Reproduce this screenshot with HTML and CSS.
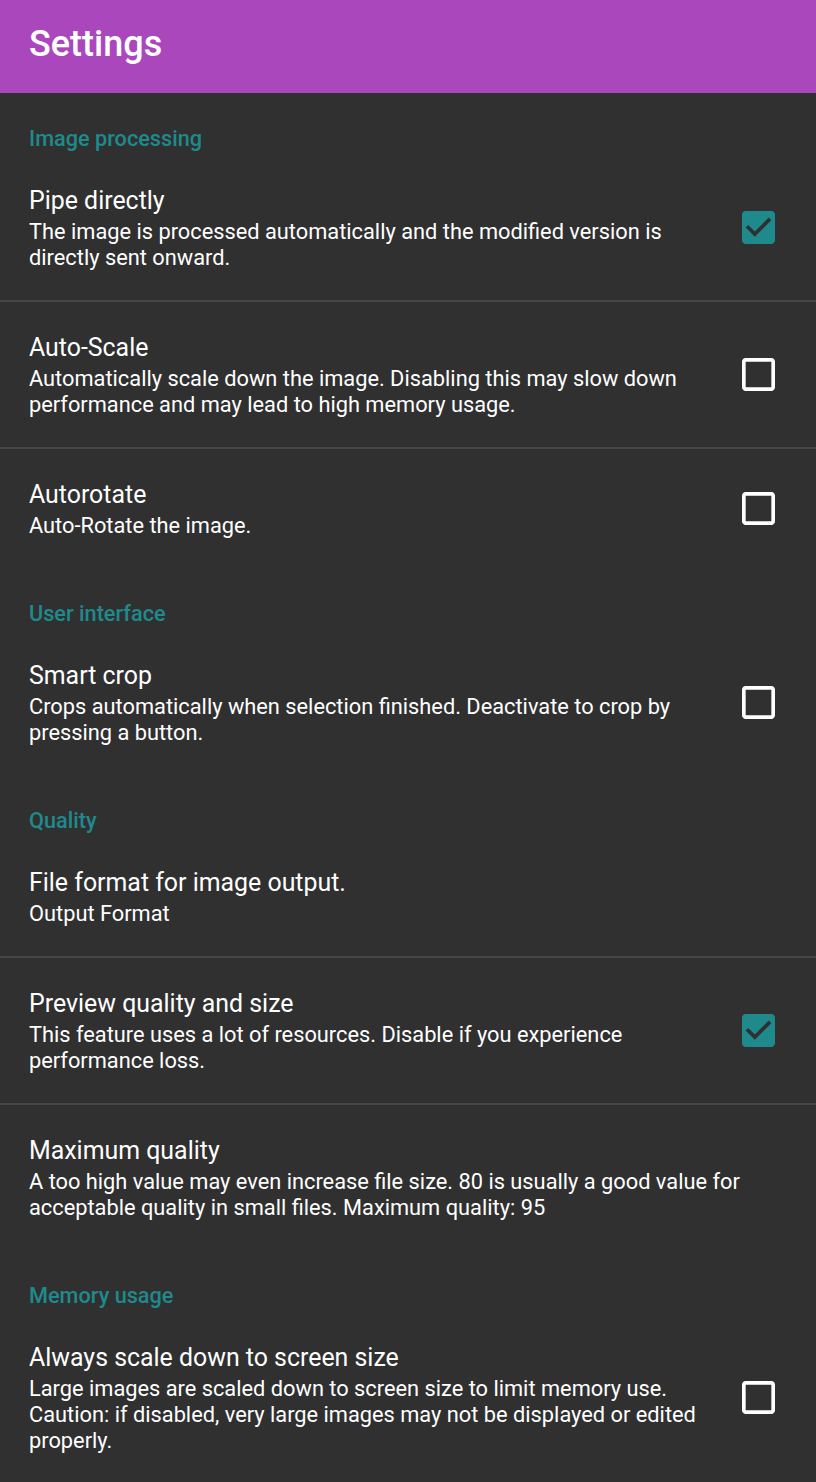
FILE: index.html
```html
<!DOCTYPE html>
<html lang="en">
<head>
<meta charset="utf-8">
<title>Settings</title>
<link rel="stylesheet" href="styles.css">
</head>
<body>
<header class="appbar"><h1 class="appbar-title">Settings</h1></header>
<main class="prefs">
  <div class="category">Image processing</div>
  <div class="item">
    <div class="text">
      <div class="title">Pipe directly</div>
      <div class="summary">The image is processed automatically and the modified version is directly sent onward.</div>
    </div>
    <svg class="cb" viewBox="3 3 18 18"><path class="cb-on" fill-rule="evenodd" d="M19 3H5c-1.11 0-2 .9-2 2v14c0 1.1.89 2 2 2h14c1.11 0 2-.9 2-2V5c0-1.1-.89-2-2-2zm-9 14l-5-5 1.41-1.41L10 14.17l7.59-7.59L19 8l-9 9z"/></svg>
  </div>
  <div class="divider"></div>
  <div class="item">
    <div class="text">
      <div class="title">Auto-Scale</div>
      <div class="summary">Automatically scale down the image. Disabling this may slow down performance and may lead to high memory usage.</div>
    </div>
    <svg class="cb" viewBox="3 3 18 18"><path class="cb-off" d="M19 5v14H5V5h14m0-2H5c-1.1 0-2 .9-2 2v14c0 1.1.9 2 2 2h14c1.1 0 2-.9 2-2V5c0-1.1-.9-2-2-2z"/></svg>
  </div>
  <div class="divider"></div>
  <div class="item">
    <div class="text">
      <div class="title">Autorotate</div>
      <div class="summary">Auto-Rotate the image.</div>
    </div>
    <svg class="cb" viewBox="3 3 18 18"><path class="cb-off" d="M19 5v14H5V5h14m0-2H5c-1.1 0-2 .9-2 2v14c0 1.1.9 2 2 2h14c1.1 0 2-.9 2-2V5c0-1.1-.9-2-2-2z"/></svg>
  </div>

  <div class="category">User interface</div>
  <div class="item">
    <div class="text">
      <div class="title">Smart crop</div>
      <div class="summary">Crops automatically when selection finished. Deactivate to crop by pressing a button.</div>
    </div>
    <svg class="cb" viewBox="3 3 18 18"><path class="cb-off" d="M19 5v14H5V5h14m0-2H5c-1.1 0-2 .9-2 2v14c0 1.1.9 2 2 2h14c1.1 0 2-.9 2-2V5c0-1.1-.9-2-2-2z"/></svg>
  </div>

  <div class="category">Quality</div>
  <div class="item">
    <div class="text">
      <div class="title">File format for image output.</div>
      <div class="summary">Output Format</div>
    </div>
  </div>
  <div class="divider"></div>
  <div class="item">
    <div class="text">
      <div class="title">Preview quality and size</div>
      <div class="summary">This feature uses a lot of resources. Disable if you experience performance loss.</div>
    </div>
    <svg class="cb" viewBox="3 3 18 18"><path class="cb-on" fill-rule="evenodd" d="M19 3H5c-1.11 0-2 .9-2 2v14c0 1.1.89 2 2 2h14c1.11 0 2-.9 2-2V5c0-1.1-.89-2-2-2zm-9 14l-5-5 1.41-1.41L10 14.17l7.59-7.59L19 8l-9 9z"/></svg>
  </div>
  <div class="divider"></div>
  <div class="item">
    <div class="text">
      <div class="title">Maximum quality</div>
      <div class="summary">A too high value may even increase file size. 80 is usually a good value for acceptable quality in small files. Maximum quality: 95</div>
    </div>
  </div>

  <div class="category">Memory usage</div>
  <div class="item">
    <div class="text">
      <div class="title">Always scale down to screen size</div>
      <div class="summary">Large images are scaled down to screen size to limit memory use. Caution: if disabled, very large images may not be displayed or edited properly.</div>
    </div>
    <svg class="cb" viewBox="3 3 18 18"><path class="cb-off" d="M19 5v14H5V5h14m0-2H5c-1.1 0-2 .9-2 2v14c0 1.1.9 2 2 2h14c1.1 0 2-.9 2-2V5c0-1.1-.9-2-2-2z"/></svg>
  </div>
</main>
</body>
</html>
```

FILE: styles.css
```css
* { box-sizing: border-box; }
html, body {
  margin: 0;
  padding: 0;
  background: #303030;
  font-family: Roboto, "Noto Sans", sans-serif;
  color: #ffffff;
}
.appbar {
  height: 93px;
  background: #ab47bc;
  display: flex;
  align-items: center;
  padding: 0 29px;
}
.appbar-title {
  margin: 0;
  font-size: 36px;
  font-weight: 500;
  line-height: 40px;
  color: #ffffff;
  margin-top: -5px;
}
.prefs {
  display: flex;
  flex-direction: column;
}
.category {
  padding: 34px 29px 4px;
  font-size: 21.7px;
  line-height: 24px;
  font-weight: 500;
  color: #1f8a8c;
}
.item {
  display: flex;
  align-items: center;
  padding: 31px 41px 29px 29px;
  gap: 20px;
}
.text {
  flex: 1;
  min-width: 0;
}
.title {
  font-size: 24.9px;
  line-height: 30px;
}
.summary {
  margin-top: 3px;
  font-size: 21.8px;
  line-height: 26px;
}
.divider {
  height: 2px;
  background: #464646;
}
.cb {
  width: 33px;
  height: 33px;
  flex: none;
  margin-bottom: 3px;
}
.cb-on { fill: #1f8a8c; }
.cb-off { fill: #ffffff; }
```
